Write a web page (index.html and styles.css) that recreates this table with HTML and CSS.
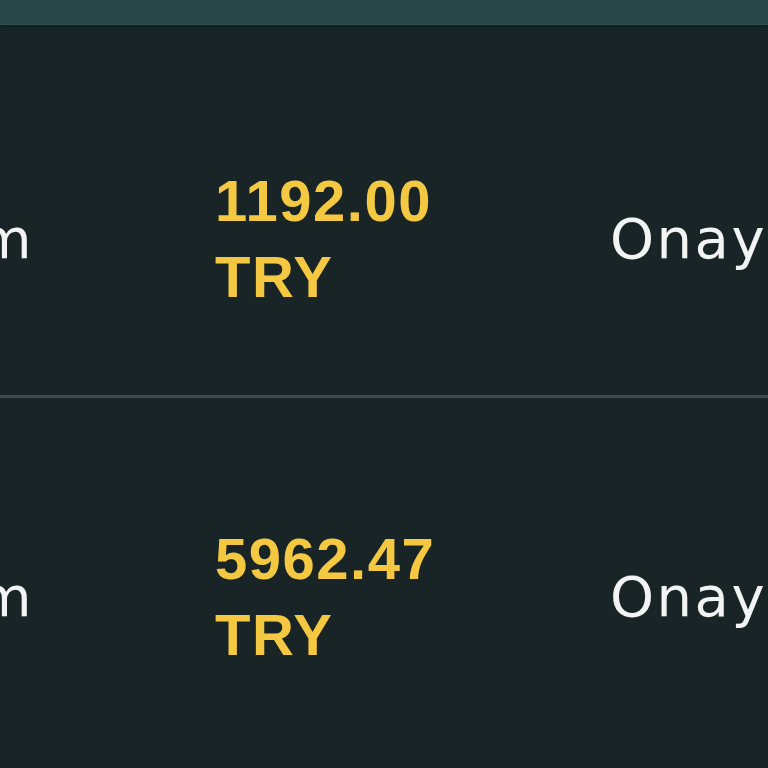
FILE: index.html
```html
<!DOCTYPE html>
<html lang="tr">
<head>
<meta charset="utf-8">
<link rel="stylesheet" href="styles.css">
</head>
<body>
<div class="table">
  <div class="head"></div>
  <div class="row row-first">
    <div class="cell cell-type">m</div>
    <div class="cell cell-amount">1192.00<br>TRY</div>
    <div class="cell cell-status">Onay</div>
  </div>
  <div class="row row-second">
    <div class="cell cell-type">m</div>
    <div class="cell cell-amount">5962.47<br>TRY</div>
    <div class="cell cell-status">Onay</div>
  </div>
</div>
</body>
</html>
```
FILE: styles.css
```css
html, body {
  margin: 0;
  padding: 0;
  background: #182426;
  width: 768px;
  height: 768px;
  overflow: hidden;
}
.table {
  display: flex;
  flex-direction: column;
  font-family: "DejaVu Sans", "Open Sans", sans-serif;
}
.head {
  height: 24px;
  background: #284749;
  border-bottom: 1px solid #35504f;
  box-shadow: 0 2px 3px rgba(10, 30, 32, 0.8);
}
.row {
  display: grid;
  grid-template-columns: 215px 395px 1fr;
  align-items: center;
  white-space: nowrap;
  overflow: hidden;
}
.row-first {
  height: 373px;
  padding-top: 58px;
  box-sizing: border-box;
  border-bottom: 3px solid #3a4a4a;
}
.row-second {
  height: 368px;
  padding-top: 30px;
  box-sizing: border-box;
}
.cell {
  font-size: 56px;
  line-height: 76px;
}
.cell-type {
  color: #f2f4f4;
  margin-left: -23px;
  letter-spacing: 1px;
}
.cell-amount {
  font-family: "Liberation Sans", Arial, sans-serif;
  font-size: 58px;
  color: #f5c842;
  font-weight: 700;
  letter-spacing: 1.5px;
}
.cell-status {
  color: #f2f4f4;
  letter-spacing: 2.5px;
}
```
